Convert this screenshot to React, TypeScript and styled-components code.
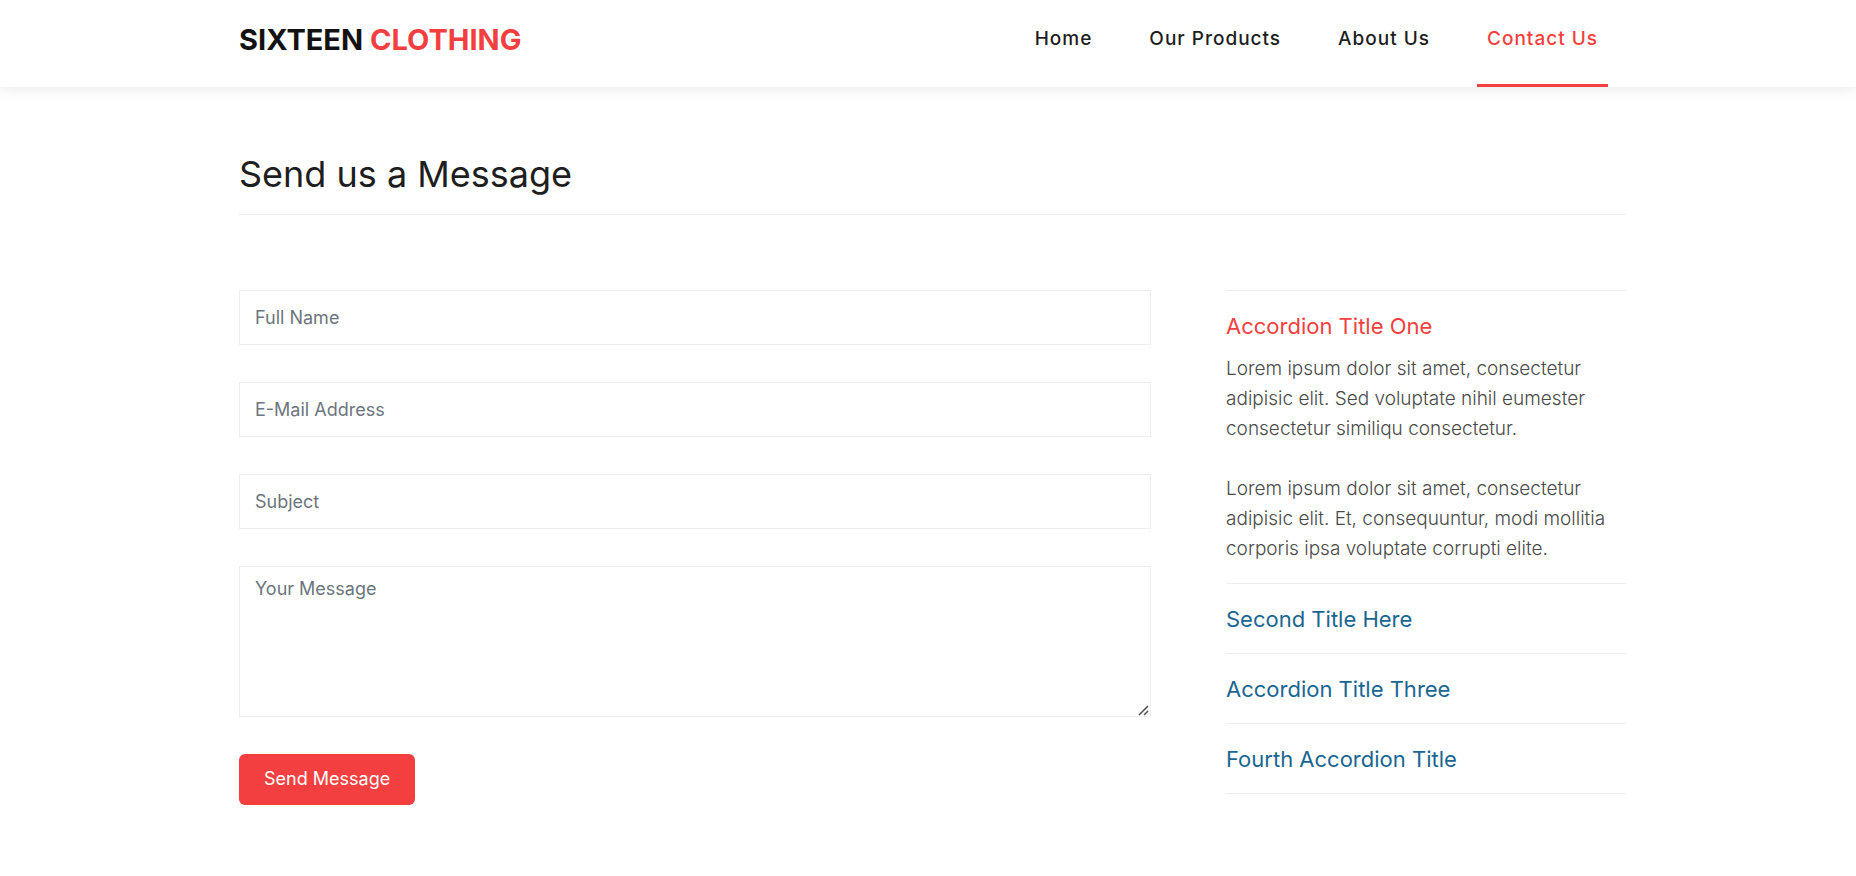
import React, { useState } from "react";
import styled, { createGlobalStyle } from "styled-components";

const GlobalStyle = createGlobalStyle`
  *, *::before, *::after { box-sizing: border-box; }
  body {
    margin: 0;
    background: #fff;
    color: #1e1e1e;
    font-family: Inter, "Open Sans", sans-serif;
    font-size: 18px;
    line-height: 30px;
  }
`;

const Container = styled.div`
  max-width: 1396px;
  margin: 0 auto;
  padding-left: 9px;
`;

const Header = styled.header`
  background: #fff;
  box-shadow: 0 1px 14px rgba(0, 0, 0, 0.1);
`;

const HeaderRow = styled(Container)`
  display: flex;
  align-items: flex-start;
  justify-content: space-between;
  padding-right: 18px;
`;

const Brand = styled.a`
  padding-top: 20px;
  color: #121212;
  font-size: 29px;
  font-weight: 700;
  line-height: 40px;
  text-decoration: none;
  text-transform: uppercase;
  white-space: nowrap;

  em {
    color: #f33f3f;
    font-style: normal;
  }
`;

const NavList = styled.ul`
  display: flex;
  gap: 37px;
  margin: 0;
  padding: 0;
  list-style: none;
`;

const NavLink = styled.a<{ $active?: boolean }>`
  display: block;
  padding: 24px 10px 30px;
  border-bottom: 3px solid ${(p) => (p.$active ? "#f33f3f" : "transparent")};
  color: ${(p) => (p.$active ? "#f33f3f" : "#1e1e1e")};
  font-size: 19px;
  font-weight: 500;
  letter-spacing: 1px;
  text-decoration: none;
  white-space: nowrap;
`;

const Heading = styled.h2`
  margin: 60px 0 75px;
  padding: 3px 0 16px;
  border-bottom: 1px solid #eee;
  font-size: 36px;
  font-weight: 400;
  line-height: 48px;
`;

const Columns = styled.div`
  display: grid;
  grid-template-columns: minmax(0, 1fr) 400px;
  gap: 75px;
  align-items: start;
  padding-bottom: 70px;
`;

const Form = styled.form`
  display: flex;
  flex-direction: column;
  align-items: flex-start;
  gap: 37px;
`;

const fieldStyle = `
  display: block;
  width: 100%;
  border: 1px solid #eee;
  border-radius: 0;
  background: #fff;
  color: #495057;
  font-family: inherit;
  font-size: 18px;
  outline: none;

  &::placeholder { color: #6c757d; opacity: 1; }
  &:focus { border-color: #ccc; }
`;

const TextField = styled.input`
  ${fieldStyle}
  height: 55px;
  padding: 0 15px;
`;

const MessageField = styled.textarea`
  ${fieldStyle}
  height: 151px;
  padding: 8px 15px;
  line-height: 27px;
  resize: vertical;

  &::-webkit-resizer {
    background: url("data:image/svg+xml,%3Csvg xmlns='http://www.w3.org/2000/svg' width='15' height='15'%3E%3Cpath d='M4 14l9-9M9 14l4-4' stroke='%23555' stroke-width='1.6'/%3E%3C/svg%3E") no-repeat right bottom;
  }
`;

const SubmitButton = styled.button`
  padding: 10px 25px 11px;
  border: 0;
  border-radius: 6px;
  background: #f33f3f;
  color: #fff;
  font-family: inherit;
  font-size: 18px;
  line-height: 30px;
  cursor: pointer;
`;

const Accordion = styled.div`
  border-top: 1px solid #eee;
`;

const AccordionItem = styled.section`
  border-bottom: 1px solid #eee;
`;

const AccordionTitle = styled.h3`
  margin: 0;
`;

const AccordionToggle = styled.button<{ $open: boolean }>`
  display: block;
  width: 100%;
  padding: ${(p) => (p.$open ? "20px 0 5px" : "20px 0 19px")};
  border: 0;
  background: none;
  color: ${(p) => (p.$open ? "#f33f3f" : "#1a6692")};
  font-family: inherit;
  font-size: 22px;
  font-weight: 400;
  line-height: 30px;
  text-align: left;
  cursor: pointer;
`;

const AccordionBody = styled.div`
  padding: 8px 0 19px;
  color: #4a4a4a;
  font-size: 19px;
  font-weight: 300;

  p { margin: 0; }
  p + p { margin-top: 30px; }
`;

const navItems = ["Home", "Our Products", "About Us", "Contact Us"];

const firstText =
  "Lorem ipsum dolor sit amet, consectetur adipisic elit. Sed voluptate nihil eumester consectetur similiqu consectetur.";
const secondText =
  "Lorem ipsum dolor sit amet, consectetur adipisic elit. Et, consequuntur, modi mollitia corporis ipsa voluptate corrupti elite.";

const titles = [
  "Accordion Title One",
  "Second Title Here",
  "Accordion Title Three",
  "Fourth Accordion Title",
];

export default function App() {
  const [open, setOpen] = useState(0);

  return (
    <>
      <GlobalStyle />
      <Header>
        <HeaderRow>
          <Brand href="#">
            Sixteen <em>Clothing</em>
          </Brand>
          <nav>
            <NavList>
              {navItems.map((item) => (
                <li key={item}>
                  <NavLink href="#" $active={item === "Contact Us"}>
                    {item}
                  </NavLink>
                </li>
              ))}
            </NavList>
          </nav>
        </HeaderRow>
      </Header>
      <Container as="main">
        <Heading>Send us a Message</Heading>
        <Columns>
          <Form onSubmit={(e) => e.preventDefault()}>
            <TextField type="text" aria-label="Full Name" placeholder="Full Name" />
            <TextField type="email" aria-label="E-Mail Address" placeholder="E-Mail Address" />
            <TextField type="text" aria-label="Subject" placeholder="Subject" />
            <MessageField aria-label="Your Message" placeholder="Your Message" />
            <SubmitButton type="submit">Send Message</SubmitButton>
          </Form>
          <Accordion>
            {titles.map((title, i) => (
              <AccordionItem key={title}>
                <AccordionTitle>
                  <AccordionToggle
                    type="button"
                    $open={open === i}
                    aria-expanded={open === i}
                    onClick={() => setOpen(open === i ? -1 : i)}
                  >
                    {title}
                  </AccordionToggle>
                </AccordionTitle>
                {open === i && (
                  <AccordionBody>
                    <p>{firstText}</p>
                    <p>{secondText}</p>
                  </AccordionBody>
                )}
              </AccordionItem>
            ))}
          </Accordion>
        </Columns>
      </Container>
    </>
  );
}
